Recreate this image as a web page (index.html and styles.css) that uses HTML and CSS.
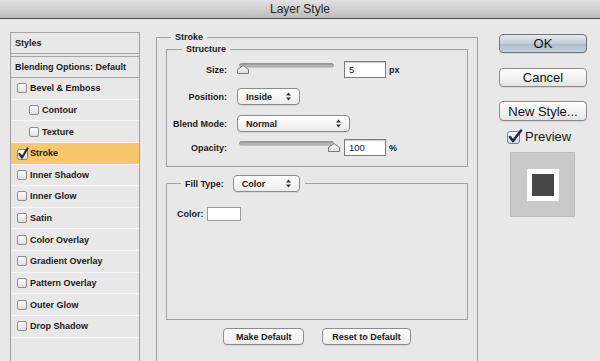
FILE: index.html
```html
<!DOCTYPE html>
<html lang="en">
<head>
    <meta charset="UTF-8">
    <meta name="viewport" content="width=device-width, initial-scale=1.0">
    <title>Layer Style</title>
    <link rel="stylesheet" href="styles.css">
</head>
<body>
    <!-- Title bar -->
    <div class="titlebar">Layer Style</div>

    <div class="dialog">
        <!-- Styles list -->
        <div class="styles-list">
            <div class="list-head">Styles</div>
            <div class="list-head">Blending Options: Default</div>
            <ul>
                <li><span class="check"></span>Bevel &amp; Emboss</li>
                <li class="sub"><span class="check"></span>Contour</li>
                <li class="sub"><span class="check"></span>Texture</li>
                <li class="active">
                    <svg class="check-on" width="13" height="13" viewBox="0 0 13 13">
                        <defs>
                            <linearGradient id="cb" x1="0" y1="0" x2="0" y2="1">
                                <stop offset="0" stop-color="#ffffff"/>
                                <stop offset="1" stop-color="#dcdcdc"/>
                            </linearGradient>
                        </defs>
                        <rect x="1.5" y="2.5" width="10" height="10" rx="2" fill="url(#cb)" stroke="#7f7f7f"/>
                        <path d="M3.5 7 L6 10.5 L11.5 1.5" fill="none" stroke="#1e2b47" stroke-width="2.2" stroke-linecap="round" stroke-linejoin="round"/>
                    </svg>Stroke
                </li>
                <li><span class="check"></span>Inner Shadow</li>
                <li><span class="check"></span>Inner Glow</li>
                <li><span class="check"></span>Satin</li>
                <li><span class="check"></span>Color Overlay</li>
                <li><span class="check"></span>Gradient Overlay</li>
                <li><span class="check"></span>Pattern Overlay</li>
                <li><span class="check"></span>Outer Glow</li>
                <li><span class="check"></span>Drop Shadow</li>
            </ul>
        </div>

        <!-- Stroke settings -->
        <fieldset class="group outer">
            <legend>Stroke</legend>

            <fieldset class="group structure">
                <legend>Structure</legend>
                <div class="form">
                    <div class="form-row">
                        <label>Size:</label>
                        <svg class="slider" width="105" height="17" viewBox="0 0 105 17">
                            <defs>
                                <linearGradient id="trk" x1="0" y1="0" x2="0" y2="1">
                                    <stop offset="0" stop-color="#8a8a8a"/>
                                    <stop offset="1" stop-color="#d4d4d4"/>
                                </linearGradient>
                                <linearGradient id="thb" x1="0" y1="0" x2="0" y2="1">
                                    <stop offset="0" stop-color="#ffffff"/>
                                    <stop offset="1" stop-color="#dadada"/>
                                </linearGradient>
                            </defs>
                            <rect x="2.5" y="2.5" width="94" height="3.5" rx="1.75" fill="url(#trk)" stroke="#8c8c8c" stroke-width="0.8"/>
                            <path d="M0.5 12.5 L0.5 8.5 L6 4.5 L11.5 8.5 L11.5 12.5 Z" fill="url(#thb)" stroke="#7a7a7a" stroke-linejoin="round"/>
                        </svg>
                        <span class="field">5</span>
                        <span class="unit">px</span>
                    </div>
                    <div class="form-row">
                        <label>Position:</label>
                        <span class="select pos">Inside
                            <svg class="arrows" width="5" height="9" viewBox="0 0 5 9"><path d="M0 3.5 L2.5 0.5 L5 3.5 Z M0 5.5 L2.5 8.5 L5 5.5 Z" fill="#333"/></svg>
                        </span>
                    </div>
                    <div class="form-row">
                        <label>Blend Mode:</label>
                        <span class="select blend">Normal
                            <svg class="arrows" width="5" height="9" viewBox="0 0 5 9"><path d="M0 3.5 L2.5 0.5 L5 3.5 Z M0 5.5 L2.5 8.5 L5 5.5 Z" fill="#333"/></svg>
                        </span>
                    </div>
                    <div class="form-row tight">
                        <label>Opacity:</label>
                        <svg class="slider" width="105" height="17" viewBox="0 0 105 17">
                            <rect x="2.5" y="2.5" width="94" height="3.5" rx="1.75" fill="url(#trk)" stroke="#8c8c8c" stroke-width="0.8"/>
                            <path d="M91.5 12.5 L91.5 8.5 L97 4.5 L102.5 8.5 L102.5 12.5 Z" fill="url(#thb)" stroke="#7a7a7a" stroke-linejoin="round"/>
                        </svg>
                        <span class="field">100</span>
                        <span class="unit">%</span>
                    </div>
                </div>
            </fieldset>

            <fieldset class="group fill">
                <legend>
                    <span>Fill Type:</span>
                    <span class="select filltype">Color
                        <svg class="arrows" width="5" height="9" viewBox="0 0 5 9"><path d="M0 3.5 L2.5 0.5 L5 3.5 Z M0 5.5 L2.5 8.5 L5 5.5 Z" fill="#333"/></svg>
                    </span>
                </legend>
                <div class="color-row">
                    <label>Color:</label>
                    <span class="swatch"></span>
                </div>
            </fieldset>

            <div class="defaults">
                <button>Make Default</button>
                <button>Reset to Default</button>
            </div>
        </fieldset>

        <!-- Dialog buttons -->
        <div class="actions">
            <button class="btn primary">OK</button>
            <button class="btn">Cancel</button>
            <button class="btn">New Style...</button>
            <div class="preview-check">
                <svg width="16" height="15" viewBox="0 0 16 15">
                    <defs>
                        <linearGradient id="pcb" x1="0" y1="0" x2="0" y2="1">
                            <stop offset="0" stop-color="#ffffff"/>
                            <stop offset="1" stop-color="#d8d8d8"/>
                        </linearGradient>
                    </defs>
                    <rect x="0.5" y="2.5" width="12" height="12" rx="2.5" fill="url(#pcb)" stroke="#7d7d7d"/>
                    <path d="M3 8 L6 12 L14 1.5" fill="none" stroke="#1e2b47" stroke-width="2.6" stroke-linecap="round" stroke-linejoin="round"/>
                </svg>
                <span>Preview</span>
            </div>
            <div class="preview-box">
                <div class="preview-square"></div>
            </div>
        </div>
    </div>
</body>
</html>
```

FILE: styles.css
```css
* {
    margin: 0;
    padding: 0;
    box-sizing: border-box;
}

body {
    width: 600px;
    height: 361px;
    overflow: hidden;
    background-color: #e8e8e8;
    font-family: "Liberation Sans", Arial, sans-serif;
    color: #1a1a1a;
}

/* Title bar */
.titlebar {
    height: 19px;
    border-bottom: 1px solid #4f4f4f;
    background: linear-gradient(#e2e2e2, #bcbcbc);
    text-align: center;
    font-size: 12px;
    line-height: 18px;
    color: #262626;
}

.dialog {
    display: flex;
    align-items: flex-start;
    height: 342px;
}

/* Styles list */
.styles-list {
    flex-shrink: 0;
    width: 130px;
    height: 345px;
    margin: 13px 0 0 10px;
    border-left: 1px solid #a2a2a2;
    border-right: 1px solid #a2a2a2;
    font-size: 9px;
    font-weight: bold;
}

.list-head {
    height: 22px;
    line-height: 20px;
    padding-left: 4px;
    border-top: 1px solid #a5a5a5;
    border-bottom: 1px solid #a5a5a5;
}

.list-head + .list-head {
    margin-top: 2px;
}

.styles-list ul {
    list-style: none;
}

.styles-list li {
    height: 21.64px;
    display: flex;
    align-items: center;
    gap: 3px;
    padding-left: 6px;
    border-bottom: 1px solid #f7f7f7;
}

.styles-list li.sub {
    padding-left: 18px;
}

.styles-list li.active {
    background-color: #f6c76b;
}

.check {
    width: 10px;
    height: 10px;
    border: 1px solid #8f8f8f;
    border-radius: 2px;
    background: linear-gradient(#ffffff, #dedede);
}

.check-on {
    margin-left: -1px;
    margin-right: -2px;
}

/* Group boxes */
.group {
    border: 1px solid #a3a3a3;
    min-width: 0;
}

.group legend {
    font-size: 9px;
    font-weight: bold;
    line-height: 12px;
    padding: 0 4px;
}

.outer {
    flex-shrink: 0;
    width: 322px;
    height: 345px;
    margin: 12px 0 0 16px;
}

.outer > legend {
    margin-left: 14px;
}

.structure {
    margin: 0 9px;
}

.structure > legend {
    margin-left: 15px;
}

.form {
    display: flex;
    flex-direction: column;
    gap: 10px;
    padding: 6px 0 10px;
}

.form-row {
    display: flex;
    align-items: center;
    height: 17px;
    font-size: 9px;
    font-weight: bold;
}

.form-row.tight {
    margin-top: -3px;
}

.form-row label {
    width: 60px;
    margin-right: 10px;
    text-align: right;
}

.slider {
    display: block;
}

.field {
    width: 42px;
    height: 17px;
    margin-left: 2px;
    padding-left: 4px;
    line-height: 15px;
    background-color: #fff;
    border: 1px solid #7c7c7c;
    box-shadow: inset 0 1px 1px rgba(0, 0, 0, 0.2);
    font-weight: normal;
    font-size: 9.5px;
}

.unit {
    margin-left: 3px;
}

/* Popup selects */
.select {
    display: inline-flex;
    align-items: center;
    justify-content: space-between;
    height: 17px;
    padding: 0 8px 0 8px;
    border: 1px solid #8b8b8b;
    border-radius: 4px;
    background: linear-gradient(#ffffff, #ececec);
    box-shadow: 0 1px 0 rgba(0, 0, 0, 0.08);
    font-size: 9px;
    font-weight: bold;
}

.select.pos {
    width: 63px;
}

.select.blend {
    width: 113px;
}

.select.filltype {
    width: 67px;
}

/* Fill type */
.fill {
    height: 145px;
    margin: 8px 9px 0;
}

.fill > legend {
    display: flex;
    align-items: center;
    gap: 9px;
    margin-left: 14px;
    padding: 0 5px 0 4px;
}

.color-row {
    display: flex;
    align-items: center;
    gap: 3px;
    padding: 15px 0 0 10px;
    font-size: 9px;
    font-weight: bold;
}

.swatch {
    width: 34px;
    height: 14px;
    background-color: #fff;
    border: 1px solid #9a9a9a;
}

.defaults {
    display: flex;
    justify-content: center;
    gap: 18px;
    margin-top: 8px;
}

.defaults button {
    min-width: 81px;
    height: 17px;
    padding: 0 9px;
    border: 1px solid #8c8c8c;
    border-radius: 4px;
    background: linear-gradient(#ffffff, #ebebeb);
    box-shadow: 0 1px 0 rgba(0, 0, 0, 0.08);
    font-family: inherit;
    font-size: 9px;
    font-weight: bold;
    color: #1a1a1a;
}

/* Dialog buttons */
.actions {
    flex-shrink: 0;
    width: 88px;
    margin: 15px 0 0 21px;
    display: flex;
    flex-direction: column;
}

.btn {
    height: 19px;
    border: 1px solid #8c8c8c;
    border-radius: 4px;
    background: linear-gradient(#ffffff, #f0f0f0 60%, #e3e3e3);
    box-shadow: 0 1px 0 rgba(0, 0, 0, 0.08);
    font-family: inherit;
    font-size: 13px;
    line-height: 17px;
    color: #111;
}

.btn + .btn {
    margin-top: 15px;
}

.btn + .btn + .btn {
    margin-top: 14px;
    height: 20px;
}

.btn.primary {
    border-color: #6c7682;
    background: linear-gradient(#e6ebf0, #c3ccd6 50%, #aebbc9 52%, #c5d0dc);
}

.preview-check {
    display: flex;
    align-items: center;
    gap: 2px;
    margin: 8px 0 0 8px;
    font-size: 13px;
}

.preview-box {
    width: 65px;
    height: 65px;
    margin: 8px 0 0 11px;
    display: flex;
    align-items: center;
    justify-content: center;
    background-color: #c9c9c9;
    border: 1px solid #bdbdbd;
}

.preview-square {
    width: 32px;
    height: 32px;
    border: 5px solid #fff;
    background-color: #474747;
}
```
